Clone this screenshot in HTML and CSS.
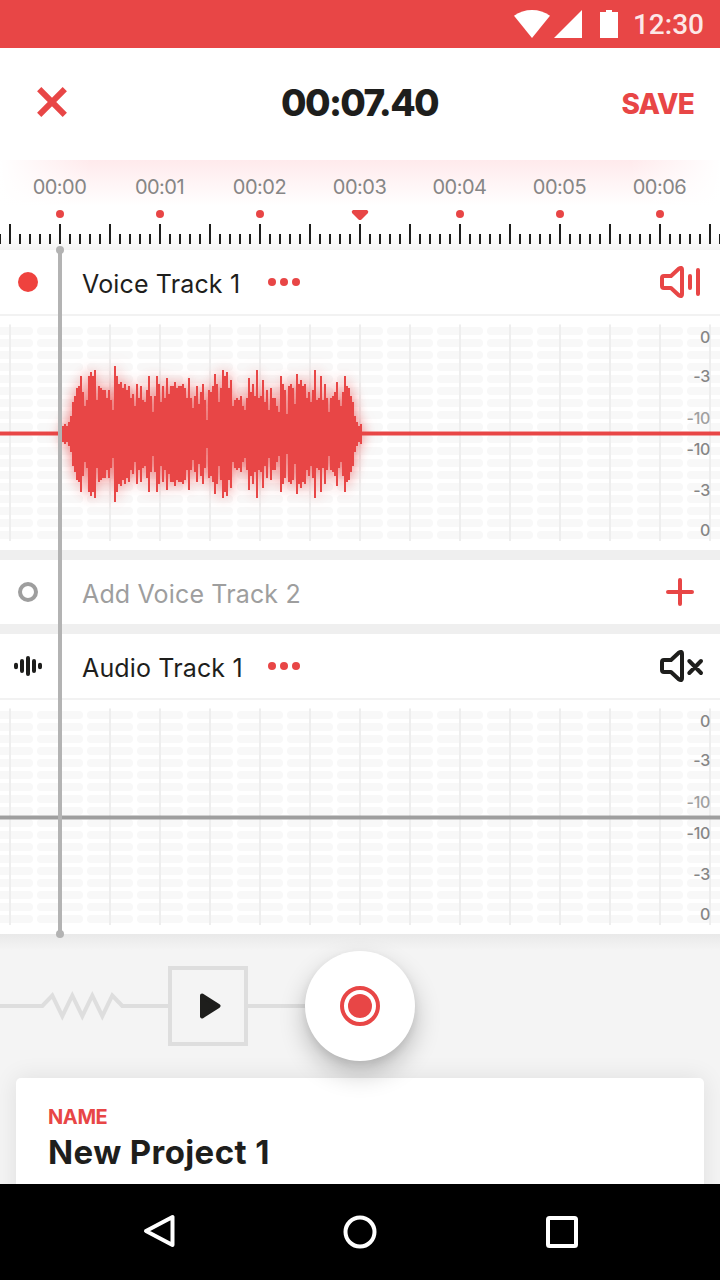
FILE: index.html
```html
<!DOCTYPE html>
<html lang="en">
<head>
<meta charset="utf-8">
<title>Recorder</title>
<link rel="stylesheet" href="styles.css">
</head>
<body>
<div class="screen">
  <div class="status">
    <svg class="status-icons" width="106" height="48" viewBox="514 0 106 48">
      <path d="M532 38 514 15.8Q522 10 532 10T550 15.8Z"/>
      <path d="M554 38 582 10V38Z"/>
      <path d="M600 12h6v-2h6v2h6v26h-18z"/>
    </svg>
    <span class="clock">12:30</span>
  </div>

  <header class="header">
    <svg class="close" width="32" height="32" viewBox="0 0 32 32"><path d="M3.200 3.200l25.600 25.600M28.800 3.200l-25.600 25.600"/></svg>
    <h1 class="title">00:07.40</h1>
    <span class="save">SAVE</span>
  </header>

  <div class="ruler">
    <div class="times">
      <span>00:00</span><span>00:01</span><span>00:02</span><span>00:03</span><span>00:04</span><span>00:05</span><span>00:06</span>
    </div>
    <svg class="ticks" width="720" height="42" viewBox="0 208 720 42">
      <defs>
        <pattern id="minor" x="-1" y="234" width="10" height="10" patternUnits="userSpaceOnUse"><rect width="2" height="10" fill="#1e1e1c"/></pattern>
        <pattern id="major" x="9" y="224" width="50" height="20" patternUnits="userSpaceOnUse"><rect width="2" height="20" fill="#1e1e1c"/></pattern>
      </defs>
      <rect y="234" width="720" height="10" fill="url(#minor)"/>
      <rect y="224" width="720" height="20" fill="url(#major)"/>
      <g fill="#e84646">
        <circle cx="60" cy="214" r="4"/><circle cx="160" cy="214" r="4"/><circle cx="260" cy="214" r="4"/>
        <circle cx="460" cy="214" r="4"/><circle cx="560" cy="214" r="4"/><circle cx="660" cy="214" r="4"/>
        <path d="M353 210h14q2 1 1 3l-6.500 6.500q-1.500 1-3 0L352 213q-1-2 1-3z"/>
      </g>
    </svg>
  </div>

  <main class="tracks">
    <section class="track">
      <div class="track-head">
        <svg class="lead" width="28" height="28" viewBox="0 0 28 28"><circle cx="14" cy="14" r="10" fill="#ef423e"/></svg>
        <span class="name voice">Voice Track 1</span>
        <svg class="more" width="32" height="8" viewBox="0 0 32 8"><circle cx="4" cy="4" r="4"/><circle cx="16" cy="4" r="4"/><circle cx="28" cy="4" r="4"/></svg>
        <svg class="sound red" width="46" height="34" viewBox="659 265 46 34">
          <path d="M664 276h7l7.500-7q3.500-2.500 3.500 1v24q0 3.500-3.500 1l-7.500-7h-7q-2 0-2-2v-8q0-2 2-2zM690 276v12M698 270v24"/>
        </svg>
      </div>
      <div class="lane">
        <svg class="plot" width="720" height="234" viewBox="0 316 720 234">
          <defs>
            <pattern id="pill" x="37" y="327" width="50" height="12" patternUnits="userSpaceOnUse"><rect width="46" height="8" rx="4" fill="#f8f8f8"/></pattern>
            <pattern id="beat" x="9" y="324" width="50" height="217" patternUnits="userSpaceOnUse"><rect width="2" height="217" fill="#eee"/></pattern>
          </defs>
          <rect y="327" width="720" height="212" fill="url(#pill)"/>
          <rect y="324.500" width="720" height="216.500" fill="url(#beat)"/>
          <path d="M0 433.500h720" stroke="#e84646" stroke-width="4"/>
          <path id="wave" class="wave"/>
        </svg>
        <div class="scale"><span>0</span><span>-3</span><span>-10</span><span>-10</span><span>-3</span><span>0</span></div>
      </div>
    </section>

    <section class="track-head add">
      <svg class="lead" width="28" height="28" viewBox="0 0 28 28"><circle cx="14" cy="14" r="8" fill="none" stroke="#9e9e9e" stroke-width="4"/></svg>
      <span class="name muted">Add Voice Track 2</span>
      <svg class="plus" width="28" height="28" viewBox="0 0 28 28"><path d="M14 2v24M2 14h24"/></svg>
    </section>

    <section class="track">
      <div class="track-head">
        <svg class="lead" width="28" height="28" viewBox="0 0 28 28"><path d="M2 12.700v2.600M8 9v10M14 6v16M20 9v10M26 12.700v2.600" stroke="#1e1e1c" stroke-width="4" stroke-linecap="round"/></svg>
        <span class="name audio">Audio Track 1</span>
        <svg class="more" width="32" height="8" viewBox="0 0 32 8"><circle cx="4" cy="4" r="4"/><circle cx="16" cy="4" r="4"/><circle cx="28" cy="4" r="4"/></svg>
        <svg class="sound dark" width="46" height="34" viewBox="659 265 46 34">
          <path d="M664 276h7l7.500-7q3.500-2.500 3.500 1v24q0 3.500-3.500 1l-7.500-7h-7q-2 0-2-2v-8q0-2 2-2zM689.300 277l11.700 12M701 277l-11.700 12"/>
        </svg>
      </div>
      <div class="lane">
        <svg class="plot" width="720" height="234" viewBox="0 316 720 234">
          <rect y="327" width="720" height="212" fill="url(#pill)"/>
          <rect y="324.500" width="720" height="216.500" fill="url(#beat)"/>
          <path d="M0 433.500h720" stroke="#9e9e9e" stroke-width="4"/>
        </svg>
        <div class="scale"><span>0</span><span>-3</span><span>-10</span><span>-10</span><span>-3</span><span>0</span></div>
      </div>
    </section>
    <div class="playhead"></div>
  </main>

  <div class="deck">
    <div class="controls">
      <svg class="wire" width="168" height="36" viewBox="0 988 168 36"><path d="M0 1006H42.300L52.300 995.500 62.300 1016.200 72.300 995.500 82.300 1016.200 92.300 995.500 102.300 1016.200 112.300 995.500 122.300 1006H168"/></svg>
      <div class="play"><svg width="24" height="28" viewBox="0 0 24 28"><path d="M4 3.500 20.500 14 4 24.500Z"/></svg></div>
      <div class="link"></div>
      <div class="record"><svg width="40" height="40" viewBox="0 0 40 40"><circle cx="20" cy="20" r="18" fill="none" stroke="#e84646" stroke-width="4"/><circle cx="20" cy="20" r="12" fill="#e84646"/></svg></div>
    </div>
    <div class="card">
      <div class="label">NAME</div>
      <div class="project">New Project 1</div>
    </div>
  </div>

  <nav class="nav">
    <svg width="40" height="40" viewBox="140 1212 40 40"><path d="M172.500 1217v28L146 1231z"/></svg>
    <svg width="40" height="40" viewBox="340 1212 40 40"><circle cx="360" cy="1232" r="14.500"/></svg>
    <svg width="40" height="40" viewBox="538 1212 40 40"><rect x="546" y="1218" width="28" height="28" rx="1.500"/></svg>
  </nav>
</div>
<script src="wave.js"></script>
</body>
</html>
```
FILE: styles.css
```css
* { box-sizing: border-box; }
body { margin: 0; background: #fff; font-family: Inter, "Liberation Sans", sans-serif; color: #1e1e1c; }
svg { display: block; flex: none; }
.screen { width: 720px; height: 1280px; overflow: hidden; display: flex; flex-direction: column; }

.status { height: 48px; background: #e84646; display: flex; align-items: center; justify-content: flex-end; gap: 13px; padding: 1px 16px 0 0; }
.status-icons { fill: #fff; margin-top: -1px; }
.clock { font: 500 28px/48px Roboto, sans-serif; color: rgba(255, 255, 255, .88); }

.header { height: 112px; display: grid; grid-template-columns: 200px 1fr 200px; align-items: center; padding: 0 25px 4px 36px; }
.close { stroke: #e84646; stroke-width: 6; stroke-linecap: butt; }
.title { margin: 2px 0 0 -12px; text-align: center; font-size: 37px; line-height: 48px; font-weight: 800; letter-spacing: -1.7px; white-space: nowrap; }
.save { margin-top: 4px; text-align: right; font-size: 28px; font-weight: 800; color: #e84646; letter-spacing: -.8px; padding-right: 1px; }

.ruler {
  height: 90px;
  background:
    linear-gradient(to top, #f3f3f3, rgba(255, 255, 255, 0) 14px),
    linear-gradient(to right, #fff, rgba(255, 255, 255, 0) 90px, rgba(255, 255, 255, 0) 630px, #fff),
    linear-gradient(#ffeaec, #fff 46px);
}
.times { height: 48px; padding: 6px 10px 0 9.5px; display: grid; grid-template-columns: repeat(7, 100px); text-align: center; font-size: 20px; line-height: 42px; letter-spacing: -.5px; color: #868686; }

.tracks { position: relative; height: 684px; background: #efefef; display: flex; flex-direction: column; gap: 10px; }
.track { height: 300px; background: #fff; }
.track-head { height: 66px; display: flex; align-items: center; padding: 0 15px 0 14px; border-bottom: 2px solid #f2f2f2; }
.add { height: 64px; background: #fff; padding: 0 26px 0 14px; border: 0; }
.name { margin-left: 40px; padding-top: 3px; font-size: 25px; line-height: 32px; letter-spacing: .15px; white-space: nowrap; width: 185px; }
.muted { width: 230px; color: #9e9e9e; }
.more { fill: #e84646; margin-left: 1px; }
.sound { margin-left: auto; fill: none; stroke-width: 4; stroke-linecap: round; stroke-linejoin: round; }
.red { stroke: #e84646; }
.dark { stroke: #1e1e1c; }
.plus { margin-left: auto; stroke: #e84646; stroke-width: 4; stroke-linecap: round; }

.lane { position: relative; height: 234px; }
.wave { fill: #e84646; filter: drop-shadow(0 0 7px rgba(232, 70, 70, .75)); }
.scale { position: absolute; top: 10.5px; right: 10px; display: flex; flex-direction: column; text-align: right; font-size: 16px; font-weight: 500; line-height: 20px; letter-spacing: -.3px; color: #868686; }
.scale span:nth-child(2) { margin-top: 19px; }
.scale span:nth-child(3) { margin-top: 22px; color: #a0a0a0; }
.scale span:nth-child(4) { margin-top: 11px; }
.scale span:nth-child(5) { margin-top: 21px; }
.scale span:nth-child(6) { margin-top: 20px; }

.playhead { position: absolute; left: 58px; top: 0; width: 4px; height: 684px; background: #b3b3b3; z-index: 2; }
.playhead::before, .playhead::after { content: ""; position: absolute; left: -2px; width: 8px; height: 8px; border-radius: 50%; background: #b3b3b3; }
.playhead::before { top: -4px; }
.playhead::after { bottom: -4px; }

.deck { height: 250px; overflow: hidden; background: linear-gradient(#e9e9e9, #f4f4f4 16px); }
.controls { height: 144px; display: flex; align-items: center; position: relative; z-index: 1; }
.wire { fill: none; stroke: #dedede; stroke-width: 4; }
.play { width: 80px; height: 80px; border: 4px solid #dedede; display: grid; place-items: center; }
.play svg { margin-left: 4px; fill: #1e1e1c; stroke: #1e1e1c; stroke-width: 4; stroke-linejoin: round; }
.link { width: 57px; height: 4px; background: #dedede; }
.record { position: relative; width: 110px; height: 110px; border-radius: 50%; background: #fff; display: grid; place-items: center; box-shadow: 0 12px 26px rgba(0, 0, 0, .24), 0 4px 8px rgba(0, 0, 0, .08); }
.record::after { content: ""; position: absolute; z-index: -1; left: 42px; top: 106px; width: 26px; height: 10px; border-radius: 0 0 8px 8px; background: rgba(255, 255, 255, .2); }
.card { margin: 0 16px; height: 140px; border-radius: 5px; background: #fff; padding: 26px 32px; box-shadow: 0 0 24px rgba(0, 0, 0, .09); }
.label { font-size: 20px; line-height: 26px; font-weight: 700; color: #e84646; letter-spacing: -.4px; }
.project { margin-top: 1px; font-size: 33px; line-height: 42px; font-weight: 700; letter-spacing: .4px; }

.nav { height: 96px; background: #000; display: grid; grid-template-columns: repeat(3, 200px); justify-content: center; justify-items: center; align-items: center; }
.nav svg { fill: none; stroke: #fff; stroke-width: 4; stroke-linejoin: round; }
```
FILE: wave.js
```javascript
// Half-heights of the recorded signal, one two-pixel bar per sample.
const samples = [8,10,8,12,18,32,38,46,48,58,42,28,34,58,62,58,64,34,48,46,44,44,36,44,34,24,68,58,50,52,46,50,44,48,36,40,28,50,36,48,34,32,44,58,38,22,38,58,50,32,48,36,56,40,48,48,52,46,48,48,50,46,36,56,36,26,38,48,30,42,50,34,14,44,42,48,60,50,32,46,64,58,62,46,54,28,34,36,34,38,28,24,36,56,42,50,38,64,36,38,54,32,44,24,46,36,36,28,22,58,50,44,20,48,50,46,30,60,50,54,48,50,36,42,32,44,64,34,36,58,34,50,36,22,36,38,42,52,34,28,42,58,48,46,38,32,18,12,8,10];
document.getElementById("wave").setAttribute("d",
  samples.map((h, i) => `M${62 + i * 2} ${434 - h}h2v${h * 2}h-2z`).join(""));
```
